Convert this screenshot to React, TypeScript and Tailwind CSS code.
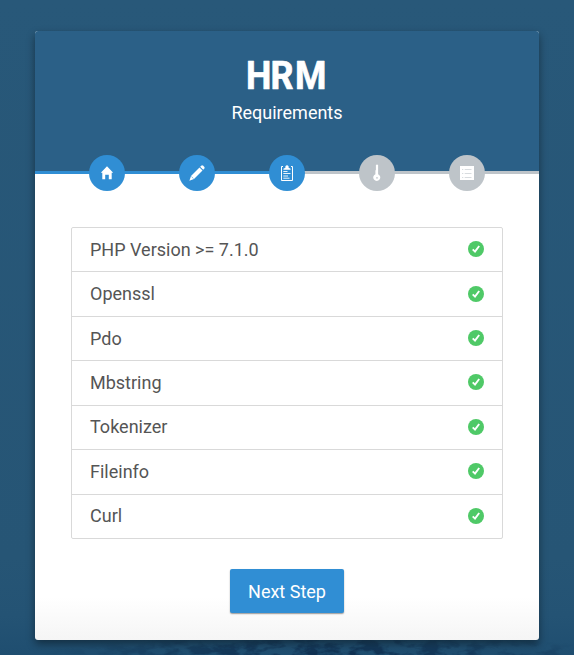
import React from "react";

const requirements = ["PHP Version >= 7.1.0", "Openssl", "Pdo", "Mbstring", "Tokenizer", "Fileinfo", "Curl"];

const Logo = () => (
  <svg width="84" height="48" viewBox="0 0 84 48" fill="#fff" stroke="#fff" strokeWidth="0.7" strokeLinejoin="round" fontSize="39" className="overflow-visible font-bold">
    <text x="1 27.8 54.4" y="36.5" transform="scale(0.92 1)">HRM</text>
  </svg>
);

const HomeIcon = () => (
  <svg width="14" height="14" viewBox="0 0 14 14" fill="#fff">
    <path d="M7 .3 13.2 6.8H11.7V13.2H8.8V8.8H5.2V13.2H2.3V6.8H.8Z" />
  </svg>
);

const PencilIcon = () => (
  <svg width="16" height="16" viewBox="0 0 16 16" fill="#fff">
    <path d="M12.2.8Q13.2-.1 14.2.8L15.2 1.8Q16 2.8 15.2 3.7L14.2 4.7 11.2 1.8Z" />
    <path d="M10.5 2.5 13.5 5.4 5 14 .4 15.7 2 11Z" />
    <path d="M2.4 11.5 4.5 13.6" stroke="#308ed4" strokeWidth=".6" />
  </svg>
);

const ClipboardIcon = () => (
  <svg width="14" height="16" viewBox="0 0 14 16" fill="#fff">
    <path d="M3 1.5H1.5V15.5H12.5V1.5H11" fill="none" stroke="#fff" strokeWidth="1" />
    <path d="M3.4 4.7V3.8L5.4 2.8V1.2Q7-.9 8.6 1.2V2.8L10.6 3.8V4.7Z" />
    <path d="M3.3 6.5H7.5M3.3 8.5H10.5M3.3 11H8M3.3 13.2H9.5" stroke="#fff" strokeWidth="0.9" />
  </svg>
);

const KeyIcon = () => (
  <svg width="10" height="18" viewBox="0 0 10 18">
    <path fill="#fff" fillRule="evenodd" d="M3.9 1Q5 .2 6.1 1V10.2A3.5 3.5 0 1 1 3.4 10.2V6.5L3.9 6ZM5 13.1A.8.8 0 1 0 5 14.7 .8.8 0 1 0 5 13.1Z" />
  </svg>
);

const ListIcon = () => (
  <svg width="14" height="14" viewBox="0 0 14 14">
    <path fill="#fff" d="M0 0H14V14H0Z" />
    <path d="M2 3.5H3.3M4.7 3.5H11.5M2 7.5H3.3M4.7 7.5H11.5M2 11.5H3.3M4.7 11.5H11.5" stroke="#d8dcdf" strokeWidth="1" />
  </svg>
);

const CheckIcon = () => (
  <svg width="16" height="16" viewBox="0 0 16 16" className="-mt-px">
    <circle cx="8" cy="8" r="8" fill="#4fc967" />
    <path d="M4.7 8.4 7 10.6 11.2 5" fill="none" stroke="#fff" strokeWidth="1.9" />
  </svg>
);

const Water = () => (
  <svg className="absolute bottom-0 left-0" width="574" height="40" viewBox="0 0 574 40">
    <defs>
      <filter id="ripples" x="0" y="0" width="100%" height="100%" colorInterpolationFilters="sRGB">
        <feTurbulence type="fractalNoise" baseFrequency="0.05 0.1" numOctaves="4" seed="8" />
        <feColorMatrix values="0 0 0 0 0.05  0 0 0 0 0.17  0 0 0 0 0.3  5 0 0 0 -2.1" />
      </filter>
      <radialGradient id="depth" cx="0.58" cy="1" r="0.5">
        <stop offset="0" stopColor="#ddd" />
        <stop offset="0.5" stopColor="#888" />
        <stop offset="1" stopColor="#000" />
      </radialGradient>
      <mask id="fade">
        <rect width="574" height="40" fill="url(#depth)" />
      </mask>
    </defs>
    <g mask="url(#fade)">
      <rect width="574" height="40" filter="url(#ripples)" />
    </g>
  </svg>
);

const steps = [
  { Icon: HomeIcon, done: true },
  { Icon: PencilIcon, done: true },
  { Icon: ClipboardIcon, done: true },
  { Icon: KeyIcon, done: false },
  { Icon: ListIcon, done: false },
];

export default function App() {
  return (
    <div className="relative h-[655px] w-[574px] overflow-hidden bg-[linear-gradient(180deg,#285879_0%,#265575_85%,#245374_94%,#1f4e70_100%)] px-[35px] pt-[31px] font-['Roboto',sans-serif]">
      <Water />
      <main className="relative flex h-[609px] flex-col overflow-hidden rounded-[3px] bg-[linear-gradient(180deg,#fff_0%,#fff_93%,#f5f5f5_100%)] shadow-[0_4px_8px_rgba(0,0,0,0.42)]">
        <header className="flex h-[140px] flex-col items-center bg-[#2b6087] pt-[22px] text-white">
          <h1 className="flex h-12 text-[39px] leading-[48px]"><Logo /></h1>
          <p className="text-lg leading-6">Requirements</p>
        </header>
        <div className="flex h-[3px] shrink-0">
          <div className="flex-1 bg-[#308ed4]" />
          <div className="flex-1 bg-[#bec4c9]" />
        </div>
        <ol className="relative mx-[27px] -mt-[19px] grid grid-cols-5">
          {steps.map(({ Icon, done }, i) => (
            <li key={i} className="flex justify-center">
              <span className={`flex size-9 items-center justify-center rounded-full ${done ? "bg-[#308ed4]" : "bg-[#bec4c9]"}`}>
                <Icon />
              </span>
            </li>
          ))}
        </ol>
        <ul className="mx-9 mt-9 flex h-[312px] shrink-0 flex-col rounded-[2px] border border-[#d9d9d9] text-lg text-[#555]">
          {requirements.map((name) => (
            <li key={name} className="flex flex-1 items-center justify-between border-b border-[#d9d9d9] px-[18px] last:border-b-0">
              <span>{name}</span>
              <CheckIcon />
            </li>
          ))}
        </ul>
        <button className="mx-auto mt-[30px] h-11 w-[114px] shrink-0 rounded-[2px] bg-[#308ed4] pt-px text-lg text-white shadow-[0_1px_1.5px_rgba(0,0,0,0.4)]">Next Step</button>
      </main>
    </div>
  );
}
